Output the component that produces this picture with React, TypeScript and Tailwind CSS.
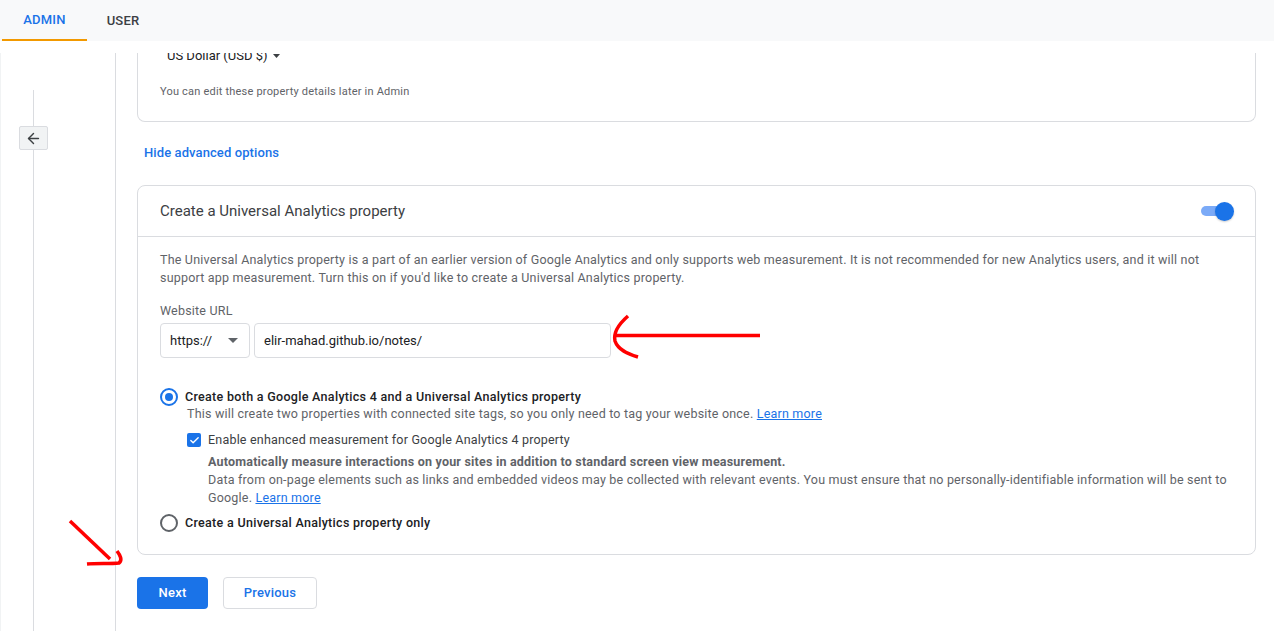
import React from "react";
import { ArrowLeft, Check } from "lucide-react";

const Tri = ({ className = "", w = 10, h = 5 }: { className?: string; w?: number; h?: number }) => (
  <svg width={w} height={h} viewBox={`0 0 ${w} ${h}`} className={className}>
    <path d={`M0 0 L${w} 0 L${w / 2} ${h} Z`} fill="currentColor" />
  </svg>
);

export default function App() {
  return (
    <div
      className="relative w-[1274px] h-[631px] overflow-hidden bg-white flex flex-col text-[#202124]"
      style={{ fontFamily: "Roboto, 'Liberation Sans', sans-serif" }}
    >
      {/* Tabs header */}
      <div className="h-[41px] bg-[#f8f9fa] flex items-stretch shrink-0">
        <div className="ml-[2px] w-[85px] flex items-center justify-center border-b-[2px] border-[#f29900] text-[13px] font-medium text-[#1a73e8] tracking-[0.2px]">
          ADMIN
        </div>
        <div className="w-[72px] flex items-center justify-center text-[13px] font-medium text-[#3c4043] tracking-[0.2px]">
          USER
        </div>
      </div>
      <div className="h-[12px] shrink-0 bg-white" />

      {/* Body */}
      <div className="flex-1 flex overflow-hidden border-l border-[#f1f3f4]">
        {/* Left rail */}
        <div className="w-[115px] shrink-0 border-r border-[#dadce0]">
          <div className="ml-[18px] w-[29px] h-full flex flex-col items-center">
            <div className="h-[37px]" />
            <div className="w-px h-[36px] bg-[#dadce0]" />
            <div className="w-[29px] h-[24px] shrink-0 bg-[#f1f3f4] border border-[#dadce0] rounded-[2px] flex items-center justify-center text-[#3c4043]">
              <ArrowLeft size={17} strokeWidth={2} />
            </div>
            <div className="w-px flex-1 bg-[#dadce0]" />
          </div>
        </div>

        {/* Main */}
        <div className="flex-1 pl-[21px] pr-[18px]">
          {/* First (scrolled) card */}
          <div className="h-[69px] flex flex-col border-x border-b border-[#dadce0] rounded-b-[8px] pl-[22px]">
            <div className="-mt-[7px] h-[20px] flex items-center gap-[5px] pl-[7px] text-[13px] text-[#202124]">
              <span>US Dollar (USD $)</span>
              <Tri w={7} h={4} className="text-[#3c4043]" />
            </div>
            <div className="mt-[18px] text-[11px] leading-[16px] text-[#5f6368] tracking-[0.2px]">
              You can edit these property details later in Admin
            </div>
          </div>

          <div className="mt-[21px] pl-[7px] h-[20px] flex items-center text-[13px] font-medium text-[#1a73e8] tracking-[0.1px]">
            Hide advanced options
          </div>

          {/* Universal Analytics card */}
          <div className="mt-[22px] border border-[#dadce0] rounded-[8px]">
            <div className="h-[51px] border-b border-[#dadce0] flex items-center justify-between pl-[22px] pr-[21px]">
              <div className="text-[15px] text-[#3c4043]">
                Create a Universal Analytics property
              </div>
              <div className="relative w-[33px] h-[19px] flex items-center">
                <div className="w-[26px] h-[10px] rounded-full bg-[#7baaf7]" />
                <div className="absolute right-0 top-0 w-[19px] h-[19px] rounded-full bg-[#1a73e8] shadow-[0_1px_2px_rgba(0,0,0,0.2)]" />
              </div>
            </div>

            <div className="pt-[14px] pb-[21px] pl-[22px] pr-[22px]">
              <p className="text-[12.5px] leading-[18px] text-[#5f6368] tracking-[0.2px]">
                The Universal Analytics property is a part of an earlier version of Google Analytics and only supports web measurement. It is not recommended for new Analytics users, and it will not support app measurement. Turn this on if you'd like to create a Universal Analytics property.
              </p>

              <div className="mt-[16px] text-[12.5px] leading-[16px] text-[#5f6368] tracking-[0.2px]">
                Website URL
              </div>
              <div className="mt-[4px] flex gap-[4px]">
                <div className="w-[90px] h-[35px] border border-[#dadce0] rounded-[4px] flex items-center justify-between pl-[9px] pr-[11px] text-[13px] text-[#202124]">
                  <span>https://</span>
                  <Tri className="text-[#5f6368]" />
                </div>
                <div className="w-[357px] h-[35px] border border-[#dadce0] rounded-[4px] flex items-center pl-[9px] text-[13px] text-[#202124]">
                  elir-mahad.github.io/notes/
                </div>
              </div>

              {/* Radio 1 */}
              <div className="mt-[29px] h-[20px] flex items-center gap-[7px]">
                <div className="w-[18px] h-[18px] rounded-full border-[2px] border-[#1a73e8] flex items-center justify-center">
                  <div className="w-[8px] h-[8px] rounded-full bg-[#1a73e8]" />
                </div>
                <span className="text-[12.5px] font-medium text-[#202124] tracking-[0.3px]">
                  Create both a Google Analytics 4 and a Universal Analytics property
                </span>
              </div>
              <div className="-mt-[1px] pl-[27px] text-[12.5px] leading-[16px] text-[#5f6368] tracking-[0.2px]">
                This will create two properties with connected site tags, so you only need to tag your website once.{" "}
                <span className="text-[#1a73e8] underline">Learn more</span>
              </div>

              <div className="pl-[27px]">
                <div className="mt-[9px] h-[18px] flex items-center gap-[7px]">
                  <div className="w-[14px] h-[14px] rounded-[2px] bg-[#1a73e8] flex items-center justify-center">
                    <Check size={11} strokeWidth={3} className="text-white" />
                  </div>
                  <span className="text-[12.5px] text-[#3c4043] tracking-[0.2px]">
                    Enable enhanced measurement for Google Analytics 4 property
                  </span>
                </div>
                <div className="mt-[4px] pl-[21px] text-[12.5px] leading-[18px] text-[#5f6368] tracking-[0.2px]">
                  <div className="font-bold">
                    Automatically measure interactions on your sites in addition to standard screen view measurement.
                  </div>
                  <div>
                    Data from on-page elements such as links and embedded videos may be collected with relevant events. You must ensure that no personally-identifiable information will be sent to Google.{" "}
                    <span className="text-[#1a73e8] underline">Learn more</span>
                  </div>
                </div>
              </div>

              {/* Radio 2 */}
              <div className="mt-[6px] h-[20px] flex items-center gap-[7px]">
                <div className="w-[18px] h-[18px] rounded-full border-[2px] border-[#5f6368]" />
                <span className="text-[12.5px] font-medium text-[#202124] tracking-[0.3px]">
                  Create a Universal Analytics property only
                </span>
              </div>
            </div>
          </div>

          {/* Buttons */}
          <div className="mt-[22px] flex gap-[15px]">
            <button className="w-[71px] h-[32px] rounded-[4px] bg-[#1a73e8] text-white text-[13px] font-medium tracking-[0.2px]">
              Next
            </button>
            <button className="w-[94px] h-[32px] rounded-[4px] border border-[#dadce0] bg-white text-[#1a73e8] text-[13px] font-medium tracking-[0.2px]">
              Previous
            </button>
          </div>
        </div>
      </div>

      {/* Red annotation arrows */}
      <svg
        className="absolute inset-0 pointer-events-none"
        width="1274"
        height="631"
        viewBox="0 0 1274 631"
      >
        <g stroke="#ff0000" strokeWidth="3.5" fill="none" strokeLinecap="butt">
          <path d="M614 335.5 L760 335.5" />
          <path d="M628 316 C620 323 613 332 615 341 C618 350 628 354 638 357" />
          <path d="M70 521 L110 559" />
          <path d="M117 551 C120 555 123 560 119 563 C110 564 97 563 87 564" />
        </g>
      </svg>
    </div>
  );
}
